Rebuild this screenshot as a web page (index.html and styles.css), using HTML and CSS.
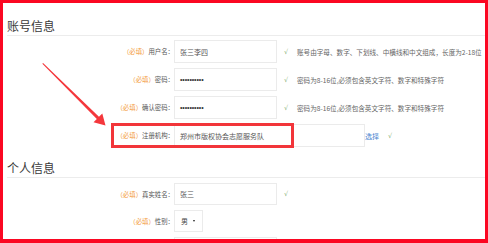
FILE: index.html
```html
<!DOCTYPE html>
<html lang="zh-CN">
<head>
<meta charset="utf-8">
<title>注册信息</title>
<link rel="stylesheet" href="styles.css">
</head>
<body>
<div class="frame">
  <section class="section section-first">
    <h2 class="title">账号信息</h2>
    <div class="rows">
      <div class="row">
        <div class="label"><span class="req">（必填）</span>用户名：</div>
        <div class="field">张三李四</div>
        <span class="check">√</span>
        <span class="hint">账号由字母、数字、下划线、中横线和中文组成，长度为2-18位</span>
      </div>
      <div class="row">
        <div class="label"><span class="req">（必填）</span>密码：</div>
        <div class="field"><span class="dots">••••••••••</span></div>
        <span class="check">√</span>
        <span class="hint">密码为8-16位,必须包含英文字符、数字和特殊字符</span>
      </div>
      <div class="row">
        <div class="label"><span class="req">（必填）</span>确认密码：</div>
        <div class="field"><span class="dots">••••••••••</span></div>
        <span class="check">√</span>
        <span class="hint">密码为8-16位,必须包含英文字符、数字和特殊字符</span>
      </div>
      <div class="row row-org">
        <div class="label"><span class="req">（必填）</span>注册机构：</div>
        <div class="field field-long">郑州市版权协会志愿服务队</div>
        <a class="pick">选择</a>
        <span class="check check-org">√</span>
        <div class="highlight"></div>
      </div>
    </div>
  </section>
  <section class="section">
    <h2 class="title">个人信息</h2>
    <div class="rows rows-tight">
      <div class="row">
        <div class="label"><span class="req">（必填）</span>真实姓名：</div>
        <div class="field">张三</div>
        <span class="check">√</span>
      </div>
      <div class="row">
        <div class="label"><span class="req">（必填）</span>性别：</div>
        <div class="field field-select"><span>男</span><span class="caret"></span></div>
      </div>
      <div class="row">
        <div class="label"></div>
        <div class="field"></div>
      </div>
    </div>
  </section>
  <svg class="arrow" width="120" height="130" viewBox="0 0 120 130">
    <polygon points="43.05,62.95 98.96,116.84 102.3,113.5 105.5,125.5 93.5,122.3 96.84,118.96 42.35,63.65" fill="#f4373c"/>
  </svg>
</div>
</body>
</html>
```

FILE: styles.css
```css
html, body {
  margin: 0;
  padding: 0;
  background: #fff;
}

.frame {
  position: relative;
  width: 488px;
  height: 243px;
  box-sizing: border-box;
  border: 3px solid #fb0722;
  border-bottom-width: 4px;
  overflow: hidden;
  background: #fff;
  font-family: "Noto Sans CJK SC", "Liberation Sans", sans-serif;
  color: #555;
}

.section-first {
  padding-top: 2px;
}

.title {
  margin: 0 0 0 4px;
  padding: 13px 0 1px;
  font-size: 12px;
  line-height: 16px;
  font-weight: normal;
  color: #3a3a3a;
  border-bottom: 1px solid #ececec;
}

.rows {
  display: flex;
  flex-direction: column;
  gap: 5px;
  padding-top: 4px;
}

.rows-tight {
  padding-top: 5px;
}

.row {
  position: relative;
  display: flex;
  align-items: center;
  height: 23px;
  white-space: nowrap;
}

.rows-tight .row {
  height: 22px;
}

.label {
  width: 171px;
  flex: none;
  text-align: right;
  font-size: 6.4px;
  color: #555;
}

.req {
  color: #f39a3a;
}

.field {
  flex: none;
  box-sizing: border-box;
  width: 103px;
  height: 100%;
  border: 1px solid #ebebeb;
  padding-left: 5px;
  display: flex;
  align-items: center;
  font-size: 7px;
  color: #555;
}

.field-long {
  width: 191px;
}

.field-select {
  width: 29px;
  padding-left: 6px;
  gap: 5px;
  color: #444;
}

.caret {
  width: 0;
  height: 0;
  border-left: 1.5px solid transparent;
  border-right: 1.5px solid transparent;
  border-top: 2.5px solid #222;
}

.dots {
  font-family: "Liberation Sans", sans-serif;
  font-size: 7px;
  letter-spacing: -0.1px;
  color: #333;
}

.check {
  flex: none;
  width: 6px;
  margin-left: 7px;
  font-family: "DejaVu Sans", sans-serif;
  font-size: 6.5px;
  color: #7fae6c;
}

.check-org {
  margin-left: 9px;
}

.hint {
  margin-left: 7px;
  font-size: 6.6px;
  color: #666;
}

.pick {
  font-size: 7px;
  color: #4a86d0;
}

.highlight {
  position: absolute;
  left: 108px;
  top: -1px;
  width: 183px;
  height: 25px;
  box-sizing: border-box;
  border: 3px solid #f2353a;
}

.arrow {
  position: absolute;
  left: -3px;
  top: -3px;
}
```
